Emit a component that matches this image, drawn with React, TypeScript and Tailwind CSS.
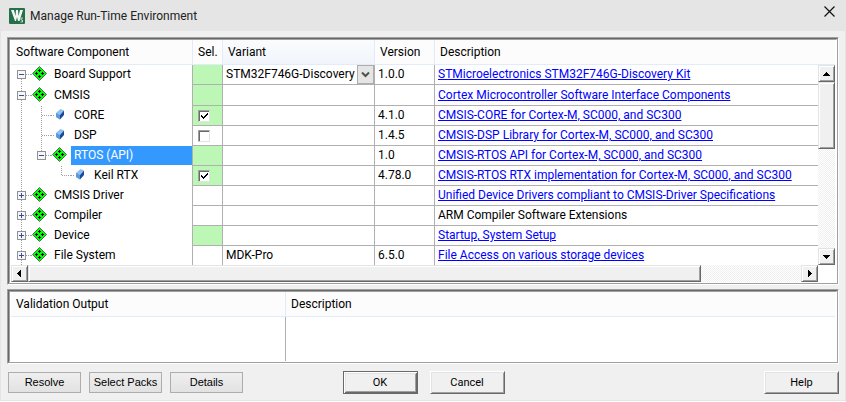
import React from "react";

type Kind = "group" | "leaf";
type Guide = "none" | "line" | "tee" | "end" | "minus" | "plus" | "first" | "last";

interface Row {
  name: string;
  kind: Kind;
  guides: Guide[];
  green?: boolean;
  check?: boolean;
  selected?: boolean;
  tall?: boolean;
  variant?: string;
  combo?: boolean;
  version?: string;
  text: string;
  link: boolean;
}

const rows: Row[] = [
  { name: "Board Support", kind: "group", guides: ["first"], green: true, variant: "STM32F746G-Discovery", combo: true, version: "1.0.0", text: "STMicroelectronics STM32F746G-Discovery Kit", link: true },
  { name: "CMSIS", kind: "group", guides: ["minus"], green: true, tall: true, text: "Cortex Microcontroller Software Interface Components", link: true },
  { name: "CORE", kind: "leaf", guides: ["line", "tee"], green: true, check: true, version: "4.1.0", text: "CMSIS-CORE for Cortex-M, SC000, and SC300", link: true },
  { name: "DSP", kind: "leaf", guides: ["line", "tee"], check: false, version: "1.4.5", text: "CMSIS-DSP Library for Cortex-M, SC000, and SC300", link: true },
  { name: "RTOS (API)", kind: "group", guides: ["line", "last"], green: true, selected: true, version: "1.0", text: "CMSIS-RTOS API for Cortex-M, SC000, and SC300", link: true },
  { name: "Keil RTX", kind: "leaf", guides: ["line", "none", "end"], green: true, check: true, version: "4.78.0", text: "CMSIS-RTOS RTX implementation for Cortex-M, SC000, and SC300", link: true },
  { name: "CMSIS Driver", kind: "group", guides: ["plus"], text: "Unified Device Drivers compliant to CMSIS-Driver Specifications", link: true },
  { name: "Compiler", kind: "group", guides: ["plus"], text: "ARM Compiler Software Extensions", link: false },
  { name: "Device", kind: "group", guides: ["plus"], green: true, text: "Startup, System Setup", link: true },
  { name: "File System", kind: "group", guides: ["plus"], variant: "MDK-Pro", version: "6.5.0", text: "File Access on various storage devices", link: true },
];

function GuideCell({ type }: { type: Guide }) {
  const boxed = type === "first" || type === "last" || type === "minus" || type === "plus";
  const up = type !== "none" && type !== "first";
  const down = type === "line" || type === "tee" || type === "first" || type === "minus" || type === "plus";
  const across = type !== "none" && type !== "line";
  return (
    <svg width="20" height="20" viewBox="0 0 20 20" shapeRendering="crispEdges" className="shrink-0" aria-hidden="true">
      <g stroke="#a0a0a0" strokeDasharray="1 1" fill="none">
        {up && <path d="M10.5 0V10" />}
        {down && <path d="M10.5 10V20" />}
        {across && <path d="M11 9.5H20" />}
      </g>
      {boxed && (
        <g>
          <rect x="6.5" y="5.5" width="8" height="8" fill="#f6f6f6" stroke="#919191" />
          <path d="M8 9.5H13" stroke="#3350a0" />
          {type === "plus" && <path d="M10.5 7V12" stroke="#3350a0" />}
        </g>
      )}
    </svg>
  );
}

function NodeIcon({ kind }: { kind: Kind }) {
  if (kind === "group") {
    return (
      <svg width="20" height="20" viewBox="0 0 20 20" className="shrink-0" aria-hidden="true">
        <path d="M0 9.5H2" stroke="#a0a0a0" strokeDasharray="1 1" />
        <path d="M8.5 1.5L15.5 8.5L8.5 15.5L1.5 8.5Z" fill="#0f0" stroke="#4f6f58" />
        <path
          d="M8 4h1v1h1v1H9v1H8V6H7V5h1zM8 10h1v1h1v1H9v1H8v-1H7v-1h1zM5 7h1v1h1v1H6v1H5V9H4V8h1zM11 7h1v1h1v1h-1v1h-1V9h-1V8h1z"
          fill="#000"
          shapeRendering="crispEdges"
        />
      </svg>
    );
  }
  return (
    <svg width="20" height="20" viewBox="0 0 20 20" className="shrink-0" aria-hidden="true">
      <path d="M0 9.5H3" stroke="#a0a0a0" strokeDasharray="1 1" />
      <path d="M5 7L9.5 3L13 4.5L9 9V13.5L5 11Z" fill="#8fc0f2" />
      <path d="M5 7L9 9V13.5L5 11Z" fill="#5b98e0" />
      <path d="M9 9L13 4.5V9L9 13.5Z" fill="#17499c" />
    </svg>
  );
}

function Tick({ label, on }: { label: string; on: boolean }) {
  return (
    <div className="relative ml-[2px] h-3 w-3">
      <input
        type="checkbox"
        aria-label={label}
        defaultChecked={on}
        className="peer block h-3 w-3 appearance-none border border-t-[#a0a0a0] border-r-[#e3e3e3] border-b-[#e3e3e3] border-l-[#a0a0a0] bg-white shadow-[inset_1px_1px_0_#696969]"
      />
      <svg width="12" height="12" viewBox="0 0 12 12" className="pointer-events-none absolute inset-0 hidden peer-checked:block" aria-hidden="true">
        <path d="M3 5h1v1h1v1h1V6h1V5h1V4h1V3h1v2H9v1H8v1H7v1H6v1H5V8H4V7H3z" fill="#000" shapeRendering="crispEdges" />
      </svg>
    </div>
  );
}

const track = "bg-[conic-gradient(#fff_25%,#f0f0f0_0_50%,#fff_0_75%,#f0f0f0_0)] bg-[size:2px_2px]";
const raised = "border border-t-[#e3e3e3] border-l-[#e3e3e3] border-r-[#696969] border-b-[#696969] bg-[#f0f0f0] shadow-[inset_1px_1px_0_#fff,inset_-1px_-1px_0_#a0a0a0]";

function Arrow({ d, label }: { d: string; label: string }) {
  return (
    <button type="button" aria-label={label} className={`flex h-[17px] w-[17px] shrink-0 items-center justify-center ${raised}`}>
      <svg width="7" height="7" viewBox="0 0 7 7" shapeRendering="crispEdges">
        <path d={d} fill="#000" />
      </svg>
    </button>
  );
}

const frame = "border border-[#a0a0a0] border-r-white border-b-white";
const frameInner = "border border-t-[#696969] border-l-[#696969] border-r-[#a0a0a0] border-b-[#a0a0a0]";
const frameCore = "border border-t-[#a0a0a0] border-l-[#a0a0a0] border-r-white border-b-white bg-white";
const th = "h-[25px] border-r border-b border-[#e1ebfa] bg-[#fcfcfc] py-0 text-left font-normal";
const td = "border-r border-b border-[#b0b0b0] p-0 pl-[3px] leading-[18px] whitespace-nowrap";

function Frame({ children }: { children: React.ReactNode }) {
  return (
    <div className={frame}>
      <div className={frameInner}>
        <div className={frameCore}>{children}</div>
      </div>
    </div>
  );
}

function FlatButton({ children }: { children: string }) {
  return (
    <button type="button" className="h-[21px] w-[73px] border border-[#adadad] bg-linear-to-b from-[#efefef] to-[#e2e2e2] font-['Liberation_Sans',sans-serif] text-[11px] leading-none whitespace-nowrap">
      {children}
    </button>
  );
}

function ClassicButton({ children, main }: { children: string; main?: boolean }) {
  const look = main
    ? "border border-[#696969] shadow-[inset_1px_1px_0_#fff,inset_-1px_-1px_0_#696969,inset_2px_2px_0_#e3e3e3,inset_-2px_-2px_0_#a0a0a0]"
    : "border border-t-white border-l-white border-r-[#696969] border-b-[#696969] shadow-[inset_1px_1px_0_#e3e3e3,inset_-1px_-1px_0_#a0a0a0]";
  return (
    <button type="button" className={`h-[23px] w-[75px] bg-[#f0f0f0] text-[11px] leading-none ${look}`}>
      {children}
    </button>
  );
}

export default function App() {
  return (
    <div className="border-r border-b border-l border-[#e5e5e5] bg-[#f0f0f0] font-[Roboto,sans-serif] text-xs text-black">
      <header className="flex h-[31px] items-center bg-[#e5e5e5] px-2">
        <svg width="16" height="16" viewBox="0 0 16 16" aria-hidden="true">
          <rect width="16" height="16" rx="1" fill="#23704a" />
          <path d="M2 2H5L6.5 8L7 2H9L9.5 8L11 2H14L10.5 13H9L8 9L7 13H6Z" fill="#f2f7f3" />
          <path d="M14 10H12V12H13.5V14H11.5" fill="none" stroke="#b9d8c4" />
        </svg>
        <h1 className="ml-[5px] grow text-xs text-[#222]">Manage Run-Time Environment</h1>
        <button type="button" aria-label="Close" className="mb-2 flex h-4 w-4 items-center justify-center">
          <svg width="11" height="11" viewBox="0 0 11 11">
            <path d="M0.5 0.5L10.5 10.5M10.5 0.5L0.5 10.5" stroke="#111" strokeWidth="1.2" />
          </svg>
        </button>
      </header>

      <main className="px-[6px] py-[6px]">
        <Frame>
          <div className="grid grid-cols-[1fr_17px] px-px">
            <table className="w-full table-fixed border-separate border-spacing-0">
              <colgroup>
                <col className="w-[182px]" />
                <col className="w-[30px]" />
                <col className="w-[152px]" />
                <col className="w-[60px]" />
                <col />
              </colgroup>
              <thead>
                <tr>
                  <th className={`${th} pl-[5px]`}>Software Component</th>
                  <th className={`${th} pl-[5px]`}>Sel.</th>
                  <th className={`${th} bg-linear-to-b from-[#fafcfe] to-[#f1f5fb] pl-[5px]`}>Variant</th>
                  <th className={`${th} pl-[5px]`}>Version</th>
                  <th className={`${th} border-r-0 pl-[5px]`}>Description</th>
                </tr>
              </thead>
              <tbody className="[&>tr:last-child>td]:h-[19px] [&>tr:last-child>td]:border-b-0 [&>tr:last-child>td>div]:h-[19px]">
                {rows.map((r) => (
                  <tr key={r.name}>
                    <td className={`border-r border-[#b0b0b0] p-0 align-top ${r.tall ? "h-[21px] pt-px" : "h-5"}`}>
                      <div className="flex h-5 items-start overflow-hidden">
                        {r.guides.map((g, i) => (
                          <GuideCell key={i} type={g} />
                        ))}
                        <NodeIcon kind={r.kind} />
                        <span className={`h-[19px] grow pl-[3px] leading-[19px] whitespace-nowrap ${r.selected ? "bg-[#3399ff] text-white" : ""}`}>{r.name}</span>
                      </div>
                    </td>
                    <td className={`${td} ${r.green ? "bg-[#bdf7b5]" : ""}`}>{r.check !== undefined && <Tick label={r.name} on={r.check} />}</td>
                    <td className={`${td} ${r.combo ? "" : "align-top"}`}>
                      {r.combo ? (
                        <div className="relative h-[19px]">
                          <select aria-label="Variant" className="block h-[19px] w-full appearance-none bg-white p-0 leading-[19px]">
                            <option>{r.variant}</option>
                          </select>
                          <span className="pointer-events-none absolute top-0 right-0 flex h-[19px] w-[17px] items-center justify-center border border-[#adadad] bg-[#e5e5e5]">
                            <svg width="9" height="7" viewBox="0 0 9 7" aria-hidden="true">
                              <path d="M1 1.5L4.5 5L8 1.5" fill="none" stroke="#505050" strokeWidth="2" />
                            </svg>
                          </span>
                        </div>
                      ) : (
                        r.variant
                      )}
                    </td>
                    <td className={`${td} align-top`}>{r.version}</td>
                    <td className={`${td} border-r-0 ${r.tall ? "" : "align-top"}`}>
                      {r.link ? (
                        <a href="#" className="text-[#0000ff] underline">
                          {r.text}
                        </a>
                      ) : (
                        r.text
                      )}
                    </td>
                  </tr>
                ))}
              </tbody>
            </table>
            <div className="flex flex-col">
              <div className="h-[25px] border-b border-[#e1ebfa] bg-[#fcfcfc]" />
              <div className={`flex grow flex-col ${track}`}>
                <Arrow label="Scroll up" d="M3 2h1v1h1v1h1v1h1v1H0V5h1V4h1V3h1z" />
                <div className={`h-[67px] ${raised}`} />
                <div className="grow" />
                <Arrow label="Scroll down" d="M0 2h7v1H6v1H5v1H4v1H3V5H2V4H1V3H0z" />
              </div>
            </div>
            <div className={`flex ${track}`}>
              <Arrow label="Scroll left" d="M5 0v7H4V6H3V5H2V4H1V3h1V2h1V1h1V0z" />
              <div className={`flex-[87] ${raised}`} />
              <div className="flex-[13]" />
              <Arrow label="Scroll right" d="M2 0v7h1V6h1V5h1V4h1V3H5V2H4V1H3V0z" />
            </div>
          </div>
        </Frame>

        <div className="mt-1">
          <Frame>
            <table className="w-full table-fixed border-separate border-spacing-0 px-px">
              <colgroup>
                <col className="w-[275px]" />
                <col />
              </colgroup>
              <thead>
                <tr>
                  <th className={`${th} pl-[5px]`}>Validation Output</th>
                  <th className={`${th} border-r-0 pl-[5px]`}>Description</th>
                </tr>
              </thead>
              <tbody>
                <tr>
                  <td className="h-11 border-r border-[#b0b0b0] p-0" />
                  <td className="p-0" />
                </tr>
              </tbody>
            </table>
          </Frame>
        </div>

        <footer className="mt-[7px] flex items-center">
          <div className="flex flex-1 gap-2 pl-px">
            <FlatButton>Resolve</FlatButton>
            <FlatButton>Select Packs</FlatButton>
            <FlatButton>Details</FlatButton>
          </div>
          <div className="flex gap-3">
            <ClassicButton main>OK</ClassicButton>
            <ClassicButton>Cancel</ClassicButton>
          </div>
          <div className="flex flex-1 justify-end">
            <ClassicButton>Help</ClassicButton>
          </div>
        </footer>
      </main>
    </div>
  );
}
